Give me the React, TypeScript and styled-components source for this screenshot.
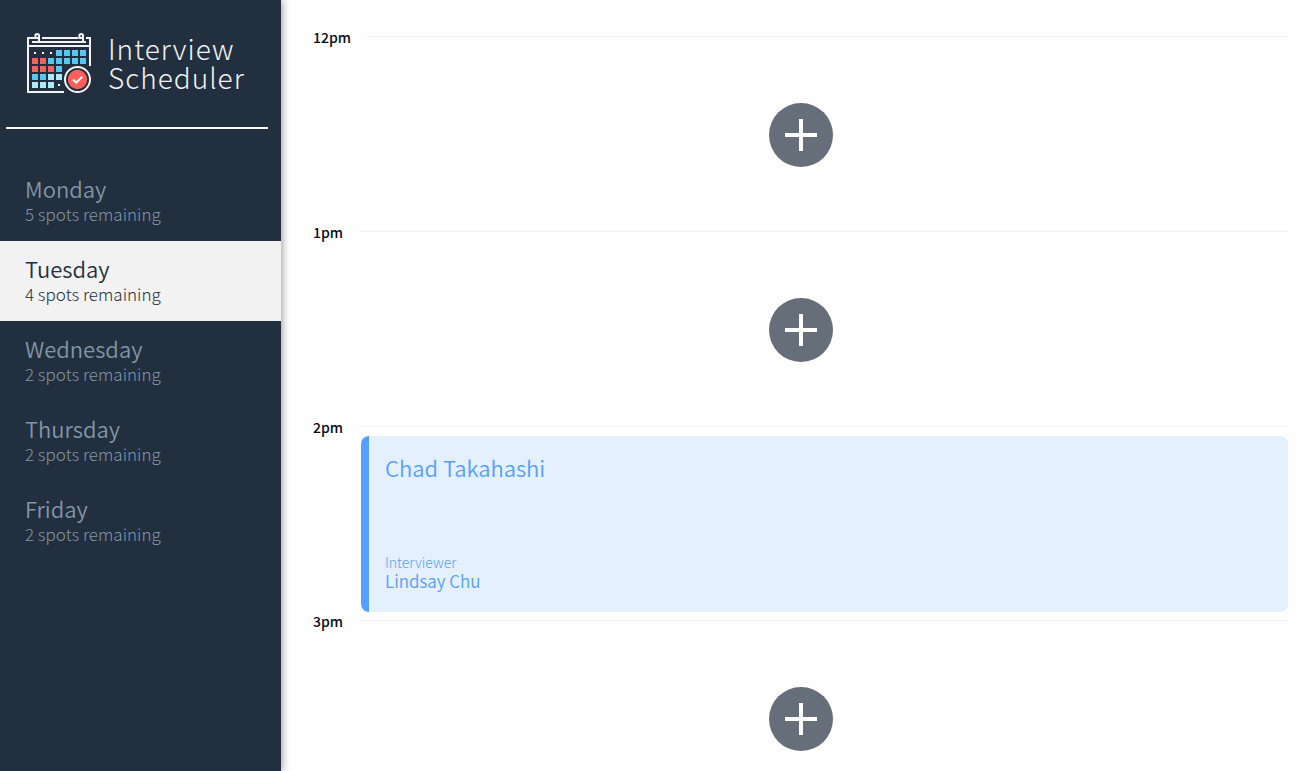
import React, { useState } from "react";
import styled, { createGlobalStyle } from "styled-components";

const GlobalStyle = createGlobalStyle`
  *, *::before, *::after { box-sizing: border-box; }
  body {
    margin: 0;
    background: #fefefe;
    font-family: "Source Sans Pro", "Noto Sans CJK SC", "Noto Sans", sans-serif;
  }
  h1, h2, h3, h4, p, ul { margin: 0; padding: 0; font-weight: 400; }
`;

const Layout = styled.main`
  display: flex;
  height: 100vh;
  overflow: hidden;
`;

const Sidebar = styled.aside`
  flex: 0 0 281px;
  background: #222f3e;
  box-shadow: 1px 0 8px rgba(0, 0, 0, 0.4);
`;

const Brand = styled.header`
  display: flex;
  align-items: center;
  gap: 16px;
  height: 127px;
  padding-left: 27px;
`;

const BrandName = styled.h1`
  padding-bottom: 2px;
  color: #f2f2f2;
  font-size: 28px;
  font-weight: 300;
  line-height: 29px;
  letter-spacing: 1px;
`;

const Divider = styled.hr`
  height: 2px;
  margin: 0 13px 0 6px;
  border: 0;
  background: #f8f8f8;
`;

const DayList = styled.ul`
  margin-top: 32px;
  list-style: none;
`;

const DayButton = styled.button<{ $selected: boolean }>`
  display: block;
  width: 100%;
  height: 80px;
  padding: 12px 25px 14px;
  border: 0;
  background: ${(p) => (p.$selected ? "#f2f2f2" : "transparent")};
  color: ${(p) => (p.$selected ? "#222f3e" : "#8395a7")};
  font-family: inherit;
  text-align: left;
  cursor: pointer;
`;

const DayName = styled.span`
  display: block;
  font-size: 22px;
  font-weight: 350;
  line-height: 28px;
`;

const DaySpots = styled.span`
  display: block;
  font-size: 17px;
  font-weight: 300;
  line-height: 24px;
`;

const Schedule = styled.section`
  flex: 1;
  min-width: 0;
  padding: 24px 24px 0 32px;
`;

const Slot = styled.article`
  color: #070b17;
`;

const SlotHeader = styled.header`
  display: flex;
  align-items: center;
  gap: 16px;
  height: 24px;
`;

const SlotTime = styled.h4`
  padding-top: 2px;
  font-size: 14px;
  font-weight: 500;
  line-height: 24px;
`;

const SlotRule = styled.hr`
  flex: 1;
  height: 1px;
  margin: 0;
  border: 0;
  background: #f2f2f2;
`;

const EmptySlot = styled.div`
  display: flex;
  align-items: center;
  justify-content: center;
  height: 171px;
  padding-top: 2px;
`;

const AddButton = styled.button`
  display: flex;
  align-items: center;
  justify-content: center;
  width: 64px;
  height: 64px;
  padding: 0;
  border: 0;
  border-radius: 50%;
  background: #666e7a;
  cursor: pointer;
`;

const Card = styled.div`
  display: flex;
  flex-direction: column;
  justify-content: space-between;
  height: 176px;
  margin: -2px 0 -4px 48px;
  padding: 15px 16px 22px;
  border-left: 8px solid #54a0ff;
  border-radius: 8px;
  background: #e4f0fd;
  color: #54a0ff;
`;

const Student = styled.h2`
  font-size: 22px;
  font-weight: 350;
  line-height: 32px;
`;

const InterviewerLabel = styled.h4`
  font-size: 14px;
  font-weight: 300;
  line-height: 20px;
`;

const InterviewerName = styled.h3`
  font-size: 17px;
  font-weight: 350;
  line-height: 18px;
`;

const cells = [
  "...bbbb",
  "rrbbbbb",
  "rrrb",
  "bbll",
  "lll.",
];
const cellColors: Record<string, string> = { b: "#54c8f0", r: "#ff5f5a", l: "#aeeaf8", ".": "#f8f8f8" };

function CalendarLogo() {
  return (
    <svg width="65" height="61" viewBox="0 0 65 61" fill="none" aria-hidden="true">
      <g stroke="#f4f4f4" strokeWidth="2">
        <path d="M8 5H1V59H37M63 33V5H59M15 5H51M1 13H63M5 9H59" />
        <path d="M12 9V2.800A1.800 1.800 0 0 0 8.400 2.800V5H12M56 9V2.800A1.800 1.800 0 0 0 52.400 2.800V5H56" />
        <circle cx="50.500" cy="46.500" r="12.500" />
      </g>
      {cells.map((row, y) =>
        row.split("").map((c, x) => {
          const dot = c === ".";
          return (
            <rect
              key={`${x}-${y}`}
              x={5 + x * 8 + (dot ? 2 : 0)}
              y={17 + y * 8 + (dot ? 2 : 0)}
              width={dot ? 2 : 6}
              height={dot ? 2 : 6}
              fill={cellColors[c]}
            />
          );
        })
      )}
      <circle cx="50.500" cy="46.500" r="9.700" fill="#ff5f5a" />
      <path d="M46 46.500L49.200 49.700L55.300 43.600" stroke="#fff" strokeWidth="2" />
    </svg>
  );
}

const days = [
  { name: "Monday", spots: 5 },
  { name: "Tuesday", spots: 4 },
  { name: "Wednesday", spots: 2 },
  { name: "Thursday", spots: 2 },
  { name: "Friday", spots: 2 },
];

const slots: { time: string; student?: string; interviewer?: string }[] = [
  { time: "12pm" },
  { time: "1pm" },
  { time: "2pm", student: "Chad Takahashi", interviewer: "Lindsay Chu" },
  { time: "3pm" },
];

export default function App() {
  const [day, setDay] = useState("Tuesday");
  return (
    <Layout>
      <GlobalStyle />
      <Sidebar>
        <Brand>
          <CalendarLogo />
          <BrandName>
            Interview
            <br />
            Scheduler
          </BrandName>
        </Brand>
        <Divider />
        <nav>
          <DayList>
            {days.map((d) => (
              <li key={d.name}>
                <DayButton $selected={d.name === day} onClick={() => setDay(d.name)}>
                  <DayName>{d.name}</DayName>
                  <DaySpots>{d.spots} spots remaining</DaySpots>
                </DayButton>
              </li>
            ))}
          </DayList>
        </nav>
      </Sidebar>
      <Schedule>
        {slots.map((s) => (
          <Slot key={s.time}>
            <SlotHeader>
              <SlotTime>{s.time}</SlotTime>
              <SlotRule />
            </SlotHeader>
            {s.student ? (
              <Card>
                <Student>{s.student}</Student>
                <div>
                  <InterviewerLabel>Interviewer</InterviewerLabel>
                  <InterviewerName>{s.interviewer}</InterviewerName>
                </div>
              </Card>
            ) : (
              <EmptySlot>
                <AddButton aria-label={`Book ${s.time}`}>
                  <svg width="32" height="32" viewBox="0 0 32 32" fill="#fff" aria-hidden="true">
                    <path d="M14 0h4v14h14v4H18v14h-4V18H0v-4h14z" />
                  </svg>
                </AddButton>
              </EmptySlot>
            )}
          </Slot>
        ))}
      </Schedule>
    </Layout>
  );
}
